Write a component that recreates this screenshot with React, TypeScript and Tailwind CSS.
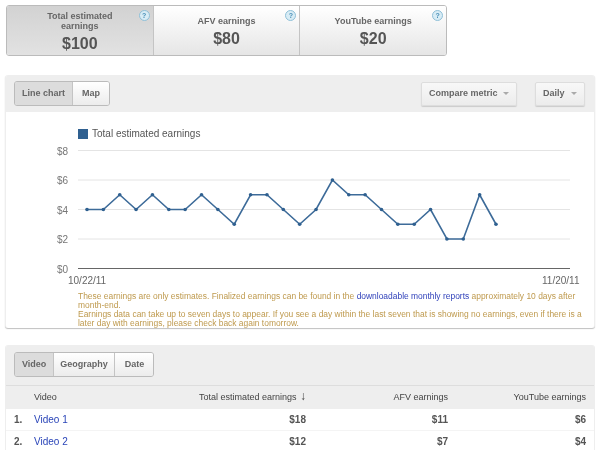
const points = [4, 4, 5, 4, 5, 4, 4, 5, 4, 3, 5, 5, 4, 3, 4, 6, 5, 5, 4, 3, 3, 4, 2, 2, 5, 3];

const rows = [
  { rank: '1.', name: 'Video 1', total: '$18', afv: '$11', youtube: '$6' },
  { rank: '2.', name: 'Video 2', total: '$12', afv: '$7', youtube: '$4' },
];

function Help() {
  return (
    <span className="absolute top-[4px] right-[3px] w-[11px] h-[11px] rounded-full border border-[#8fc0d8] bg-[#d8ecf5] flex items-center justify-center text-[7px] leading-none font-bold text-[#4a90b8]">
      ?
    </span>
  );
}

function Tab({ title, value, active, last }: { title: string; value: string; active?: boolean; last?: boolean }) {
  return (
    <div
      className={`relative flex-1 flex flex-col items-center justify-center pt-[2px] text-[#666] font-bold ${last ? '' : 'border-r border-[#c4c4c4]'} ${
        active ? 'bg-gradient-to-b from-[#d2d2d2] to-[#e2e2e2]' : 'bg-gradient-to-b from-white to-[#e6e6e6]'
      }`}
    >
      <Help />
      <div className="text-[9px] leading-[10px] text-center w-[90px]">{title}</div>
      <div className="text-[16px] leading-[18px] mt-[4px] text-[#555]">{value}</div>
    </div>
  );
}

function Segments({ items }: { items: { label: string; padding: string }[] }) {
  return (
    <div className="flex h-[25px] border border-[#bbb] rounded-[3px] overflow-hidden text-[9px] font-bold text-[#666]">
      {items.map((item, i) => (
        <div
          key={item.label}
          className={`${item.padding} flex items-center ${i > 0 ? 'border-l border-[#c4c4c4]' : ''} ${
            i === 0 ? 'bg-[#dcdcdc]' : 'bg-gradient-to-b from-white to-[#ececec]'
          }`}
        >
          {item.label}
        </div>
      ))}
    </div>
  );
}

function Dropdown({ label, width }: { label: string; width: string }) {
  return (
    <div className={`h-[24px] ${width} flex items-center justify-between px-[7px] rounded-[2px] border border-[#ddd] bg-gradient-to-b from-[#f8f8f8] to-[#ececec] shadow-[0_1px_1px_rgba(0,0,0,0.15)] text-[9px] font-bold text-[#666]`}>
      <span>{label}</span>
      <span className="w-0 h-0 border-x-[3px] border-x-transparent border-t-[3px] border-t-[#aaa]" />
    </div>
  );
}

function Chart() {
  const x = (i: number) => 81 + i * 16.36;
  const y = (v: number) => 128.5 - v * 14.75;
  const line = points.map((v, i) => `${x(i)},${y(v)}`).join(' ');
  return (
    <svg width="588" height="147" className="block" fontFamily="'Liberation Sans', sans-serif">
      {[8, 6, 4, 2].map((v) => (
        <line key={v} x1="72" x2="564" y1={y(v)} y2={y(v)} stroke="#e4e4e4" />
      ))}
      <line x1="72" x2="564" y1="128.5" y2="128.5" stroke="#666" />
      {[8, 6, 4, 2, 0].map((v) => (
        <text key={v} x="62" y={y(v) + 4} textAnchor="end" fontSize="10" fill="#777">
          ${v}
        </text>
      ))}
      <polyline points={line} fill="none" stroke="#3d6b99" strokeWidth="1.6" />
      {points.map((v, i) => (
        <circle key={i} cx={x(i)} cy={y(v)} r="1.8" fill="#2f6090" />
      ))}
      <text x="62" y="144" fontSize="10" fill="#666">
        10/22/11
      </text>
      <text x="536" y="144" fontSize="10" fill="#666">
        11/20/11
      </text>
    </svg>
  );
}

export default function App() {
  return (
    <div className="w-[600px] h-[450px] overflow-hidden bg-white pt-[5px] blur-[0.4px] font-['Liberation_Sans',sans-serif]">
      <div className="ml-[6px] w-[441px] h-[51px] flex rounded-[3px] border border-[#bbb] overflow-hidden">
        <Tab title="Total estimated earnings" value="$100" active />
        <Tab title="AFV earnings" value="$80" />
        <Tab title="YouTube earnings" value="$20" last />
      </div>

      <div className="mt-[19px] ml-[5px] w-[590px] h-[253px] rounded-[3px] bg-white border-x border-[#eee] shadow-[0_1px_1px_rgba(0,0,0,0.25)] overflow-hidden">
        <div className="h-[37px] bg-[#eeeeee] flex items-center pl-[8px] pr-[9px]">
          <Segments
            items={[
              { label: 'Line chart', padding: 'px-[7px]' },
              { label: 'Map', padding: 'px-[9px]' },
            ]}
          />
          <div className="ml-auto flex gap-[18px]">
            <Dropdown label="Compare metric" width="w-[96px]" />
            <Dropdown label="Daily" width="w-[50px]" />
          </div>
        </div>
        <div className="h-[28px] flex items-start pt-[16px] pl-[72px] gap-[4px] text-[10px] leading-[12px] text-[#555]">
          <span className="w-[10px] h-[10px] bg-[#2f6090] mt-[1px]" />
          <span>Total estimated earnings</span>
        </div>
        <Chart />
        <div className="mt-[5px] pl-[72px] w-[588px] text-[8.45px] leading-[9px] text-[#bf9a4e]">
          <div className="whitespace-nowrap">
            These earnings are only estimates. Finalized earnings can be found in the{' '}
            <span className="text-[#3344bb]">downloadable monthly reports</span> approximately 10 days after
          </div>
          <div>month-end.</div>
          <div className="whitespace-nowrap">
            Earnings data can take up to seven days to appear. If you see a day within the last seven that is showing no earnings, even if there is a
          </div>
          <div>later day with earnings, please check back again tomorrow.</div>
        </div>
      </div>

      <div className="mt-[17px] ml-[5px] w-[590px] rounded-t-[3px] border-x border-[#eee] overflow-hidden">
        <div className="h-[41px] bg-[#eeeeee] flex items-start pt-[7px] pl-[8px] border-b border-[#ddd]">
          <Segments
            items={[
              { label: 'Video', padding: 'px-[7px]' },
              { label: 'Geography', padding: 'px-[6px]' },
              { label: 'Date', padding: 'pl-[10px] pr-[9px]' },
            ]}
          />
        </div>
        <div className="h-[23px] bg-[#eeeeee] grid grid-cols-[170px_130px_142px_1fr] items-center pr-[8px] text-[9px] text-[#444]">
          <span className="pl-[28px]">Video</span>
          <span className="text-right whitespace-nowrap">
            Total estimated earnings <span className="text-[12px] leading-[12px] ml-[1px]">↓</span>
          </span>
          <span className="text-right">AFV earnings</span>
          <span className="text-right">YouTube earnings</span>
        </div>
        {rows.map((row) => (
          <div key={row.rank} className="h-[22px] grid grid-cols-[170px_130px_142px_1fr] items-center pr-[8px] border-b border-[#f4f4f4] text-[10px] font-bold text-[#555]">
            <span className="pl-[8px] flex">
              <span className="w-[20px]">{row.rank}</span>
              <span className="font-normal text-[#2a45b8]">{row.name}</span>
            </span>
            <span className="text-right">{row.total}</span>
            <span className="text-right">{row.afv}</span>
            <span className="text-right">{row.youtube}</span>
          </div>
        ))}
      </div>
    </div>
  );
}
